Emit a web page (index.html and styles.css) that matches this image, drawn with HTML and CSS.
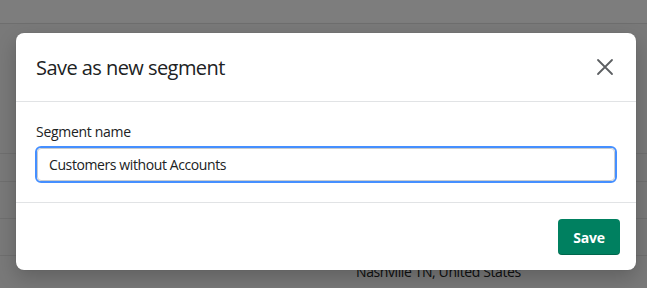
FILE: index.html
```html
<!DOCTYPE html>
<html lang="en">
<head>
    <meta charset="UTF-8">
    <meta name="viewport" content="width=device-width, initial-scale=1.0">
    <title>Save as new segment</title>
    <link rel="stylesheet" href="styles.css">
</head>
<body>
<div class="page">
    <div class="page-header"></div>
    <div class="table">
        <div class="row"></div>
        <div class="row"></div>
        <div class="row"></div>
        <div class="row row-text"><span class="address">Nashville TN, United States</span></div>
    </div>
</div>
<div class="overlay"></div>
<div class="modal">
    <div class="modal-header">
        <h2>Save as new segment</h2>
        <button class="close-btn" aria-label="Close">
            <svg width="20" height="20" viewBox="0 0 20 20">
                <path d="M3 3 L17 17 M17 3 L3 17" stroke="#5c5f62" stroke-width="1.8" stroke-linecap="round"/>
            </svg>
        </button>
    </div>
    <div class="modal-body">
        <label class="field-label" for="segmentName">Segment name</label>
        <div class="input-wrap">
            <input id="segmentName" class="text-input" type="text" value="Customers without Accounts">
        </div>
    </div>
    <div class="modal-footer">
        <button class="save-btn">Save</button>
    </div>
</div>
</body>
</html>
```

FILE: styles.css
```css
html, body {
    margin: 0;
    padding: 0;
}
body {
    width: 647px;
    height: 288px;
    overflow: hidden;
    position: relative;
    font-family: "Open Sans", "Noto Sans", sans-serif;
    background: #f2f2f2;
}
.page-header {
    height: 23px;
    background: #fbfbfb;
    border-bottom: 1px solid #dcdcdc;
}
.table {
    padding-top: 129px;
}
.row {
    height: 36px;
    border-top: 1px solid #dedede;
}
.row:first-child {
    height: 27px;
}
.row-text {
    height: 33px;
    display: flex;
    align-items: flex-start;
}
.address {
    margin: 7px 0 0 356px;
    font-size: 14px;
    line-height: 18px;
    letter-spacing: -0.4px;
    color: #202223;
}
.overlay {
    position: absolute;
    inset: 0;
    background: rgba(0, 0, 0, 0.5);
}
.modal {
    position: absolute;
    left: 16px;
    top: 33px;
    width: 620px;
    height: 237px;
    background: #fff;
    border-radius: 8px;
    box-shadow: 0 0 1px rgba(0, 0, 0, 0.2), 0 8px 20px rgba(0, 0, 0, 0.2);
    display: flex;
    flex-direction: column;
    overflow: hidden;
}
.modal-header {
    height: 69px;
    flex-shrink: 0;
    box-sizing: border-box;
    border-bottom: 1px solid #e1e3e5;
    display: flex;
    align-items: center;
    justify-content: space-between;
    padding: 0 20px;
}
.modal-header h2 {
    margin: 0;
    font-size: 20px;
    font-weight: 400;
    letter-spacing: -0.55px;
    color: #202223;
}
.close-btn {
    border: none;
    background: none;
    padding: 0;
    width: 20px;
    height: 20px;
    margin-right: 1px;
    cursor: pointer;
}
.modal-body {
    padding: 20px 19px 19px 19px;
    border-bottom: 1px solid #e1e3e5;
}
.field-label {
    display: block;
    font-size: 14px;
    line-height: 20px;
    letter-spacing: -0.3px;
    color: #202223;
    margin: 0 0 4px 1px;
}
.input-wrap {
    border: 2px solid #458fff;
    border-radius: 6px;
}
.text-input {
    display: block;
    width: 100%;
    box-sizing: border-box;
    height: 33px;
    border: 1px solid #c9cccf;
    border-radius: 4px;
    padding: 0 11px;
    font-family: inherit;
    font-size: 14px;
    letter-spacing: -0.4px;
    color: #202223;
    outline: none;
}
.modal-footer {
    flex: 1;
    display: flex;
    justify-content: flex-end;
    align-items: flex-start;
    padding: 16px 16px 0 0;
}
.save-btn {
    width: 62px;
    height: 36px;
    border: none;
    border-radius: 4px;
    background: #008060;
    color: #fff;
    font-family: inherit;
    font-size: 14px;
    font-weight: 700;
    letter-spacing: -0.2px;
    box-shadow: inset 0 -1px 0 rgba(0, 0, 0, 0.2);
    cursor: pointer;
}
```
